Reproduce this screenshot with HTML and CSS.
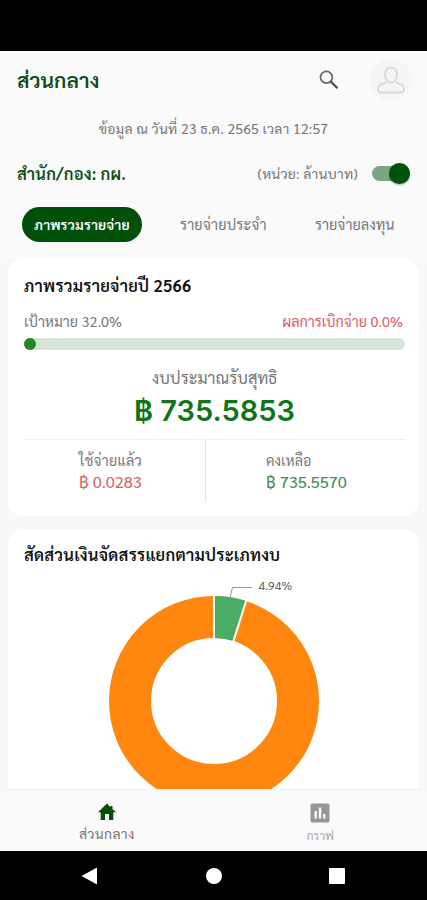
FILE: index.html
```html
<!DOCTYPE html>
<html lang="th">
<head>
<meta charset="utf-8">
<title>ส่วนกลาง</title>
<link rel="stylesheet" href="styles.css">
</head>
<body>
<div class="phone">
  <div class="status"></div>
  <header class="appbar">
    <h1 class="title">ส่วนกลาง</h1>
    <svg class="search" viewBox="0 0 20 20" width="20" height="20"><circle cx="7.4" cy="7.2" r="5.9" fill="none" stroke="#666" stroke-width="1.7"/><path d="M11.6 11.4 18.500 18.300" stroke="#555" stroke-width="2.3"/></svg>
    <div class="avatar"><svg viewBox="0 0 30 30" width="30" height="30" fill="none" stroke="#dadada" stroke-width="1.8"><path d="M9 9.500C9 5 11.300 2.600 15 2.600S21 5 21 9.500 18.500 17.500 15 17.500 9 14 9 9.500Z"/><path d="M10.500 17.500C5 18.500 2 20 2 24Q2 27.500 5 27.500H25Q28 27.500 28 24C28 20 25 18.500 19.500 17.500"/></svg></div>
  </header>
  <p class="date">ข้อมูล ณ วันที่ 23 ธ.ค. 2565 เวลา 12:57</p>
  <div class="office">
    <strong class="office-name">สำนัก/กอง: กผ.</strong>
    <span class="unit">(หน่วย: ล้านบาท)</span>
    <span class="switch"><span class="knob"></span></span>
  </div>
  <nav class="tabs">
    <span class="tab active"><span class="tab-a">ภาพรวมรายจ่าย</span></span>
    <span class="tab tab-b">รายจ่ายประจำ</span>
    <span class="tab tab-c">รายจ่ายลงทุน</span>
  </nav>
  <main class="content">
    <section class="card summary">
      <h2 class="heading">ภาพรวมรายจ่ายปี 2566</h2>
      <div class="goals"><span class="goal">เป้าหมาย 32.0%</span><span class="result">ผลการเบิกจ่าย 0.0%</span></div>
      <div class="bar"><span class="bar-dot"></span></div>
      <p class="net-label">งบประมาณรับสุทธิ</p>
      <p class="net">฿ 735.5853</p>
      <div class="split">
        <div class="cell"><span class="cell-label used">ใช้จ่ายแล้ว</span><span class="spent">฿ 0.0283</span></div>
        <div class="cell right"><span class="cell-label">คงเหลือ</span><span class="left-over">฿ 735.5570</span></div>
      </div>
    </section>
    <section class="card chart-card">
      <h2 class="heading chart-heading">สัดส่วนเงินจัดสรรแยกตามประเภทงบ</h2>
      <svg class="donut" width="240" height="240" viewBox="0 0 240 240">
        <circle cx="120" cy="130" r="84" fill="none" stroke="#ff870f" stroke-width="42"/>
        <path d="M120 46A84 84 0 0 1 145.700 50" fill="none" stroke="#4bac65" stroke-width="42"/>
        <path d="M120 68V24M139.100 71 152.600 28.500" stroke="#fff" stroke-width="2"/>
        <path d="M136 27 138.500 16.500H158" fill="none" stroke="#999" stroke-width="1"/>
        <text class="slice-label" x="164.500" y="19">4.94%</text>
      </svg>
    </section>
  </main>
  <nav class="bottom">
    <div class="item home"><svg viewBox="0 0 20 18" width="20" height="18"><path d="M10 .5 1 9.300H3.700V17H8V11H12V17H16.300V9.300H19L15.500 6V3H13.500V4.200Z" fill="#005006"/></svg><span class="home-text">ส่วนกลาง</span></div>
    <div class="item graph"><svg viewBox="0 0 20 20" width="20" height="20"><rect x=".5" y=".5" width="19" height="19" rx="2" fill="#969696"/><path d="M5.700 8V15.500M10 4.500V15.500M14.300 11V15.500" stroke="#fafafa" stroke-width="2.400"/></svg><span class="graph-text">กราฟ</span></div>
  </nav>
  <div class="system">
    <svg width="18" height="18" viewBox="0 0 18 18"><path d="M.5 9 16 .5V17.500Z" fill="#fff"/></svg>
    <svg width="18" height="18" viewBox="0 0 18 18"><circle cx="9" cy="9" r="8" fill="#fff"/></svg>
    <svg width="18" height="18" viewBox="0 0 18 18"><rect x="1" y="1" width="16" height="16" rx="1" fill="#fff"/></svg>
  </div>
</div>
</body>
</html>
```

FILE: styles.css
```css
* { box-sizing: border-box; margin: 0; padding: 0; }
body { background: #000; font-family: Sarabun, "Noto Sans Thai Looped", "Noto Looped Thai", Laksaman, Loma, Garuda, Waree, "Noto Sans", sans-serif; color: #777; }
.phone { width: 427px; height: 900px; display: flex; flex-direction: column; overflow: hidden; background: #fafafa; white-space: nowrap; }
.status { height: 51px; background: #000; flex: none; }
.appbar { height: 58px; flex: none; display: flex; align-items: center; padding-left: 17px; }
.title { flex: 1; font-size: 21px; line-height: 30px; color: #0b4d13; font-weight: 600; }
.search { margin-right: 31px; }
.avatar { width: 42px; height: 42px; border-radius: 50%; background: #f5f5f5; display: flex; align-items: center; justify-content: center; margin-right: 15px; }
.date { height: 38px; line-height: 38px; text-align: center; font-size: 14px; letter-spacing: .16px; flex: none; }
.office { height: 53px; flex: none; display: flex; align-items: center; padding: 0 17px; }
.office-name { flex: 1; font-size: 16.5px; line-height: 24px; padding-bottom: 1px; color: #0b4d13; letter-spacing: .2px; font-weight: 600; }
.unit { font-size: 14px; letter-spacing: .2px; margin-right: 14px; padding-bottom: 1px; }
.switch { width: 38px; height: 15px; border-radius: 8px; background: #79a77f; display: flex; align-items: center; justify-content: flex-end; }
.knob { width: 21px; height: 21px; flex: none; border-radius: 50%; background: #00530a; box-shadow: 0 1px 2px #0005; }
.tabs { height: 58px; flex: none; display: flex; align-items: flex-start; padding: 7px 0 0 22px; }
.tab { height: 35px; line-height: 34px; font-size: 14.5px; }
.active { width: 120px; border-radius: 18px; text-align: center; background: #00500a; color: #fff; font-size: 14px; font-weight: 600; margin-right: 38px; letter-spacing: .1px; }
.tab-b { width: 135px; letter-spacing: .15px; }
.content { flex: 1; min-height: 0; overflow: hidden; padding: 0 8px; display: flex; flex-direction: column; gap: 13px; background: #f8f8f8; }
.card { background: #fff; border-radius: 16px; padding: 0 14px 0 16px; flex: none; }
.summary { height: 258px; padding-top: 13px; }
.heading { font-size: 16.5px; line-height: 28px; height: 28px; color: #111; letter-spacing: .25px; font-weight: 600; }
.goals { display: flex; justify-content: space-between; font-size: 14.4px; line-height: 22px; height: 24px; margin-top: 11px; padding-right: 2px; }
.result { color: #d76167; }
.bar { height: 12px; border-radius: 6px; background: #d5e4d7; margin-top: 4px; }
.bar-dot { display: block; width: 12px; height: 12px; border-radius: 50%; background: #278529; }
.net-label { text-align: center; font-size: 16.5px; height: 26px; line-height: 26px; margin-top: 14px; }
.net { font-family: Inter, "Noto Sans", sans-serif; text-align: center; font-size: 29px; height: 40px; line-height: 41px; font-weight: 600; color: #107519; }
.split { display: flex; border-top: 1px solid #eee; margin-top: 9px; }
.cell { height: 62px; width: 181px; padding: 10px 0 0 55px; display: flex; flex-direction: column; font-size: 16.4px; }
.cell span { height: 21px; line-height: 21px; }
.cell .cell-label { font-size: 14.3px; }
.cell .used { letter-spacing: .25px; }
.right { flex: 1; padding-left: 60px; border-left: 1px solid #e5e5e5; }
.spent { color: #d76167; }
.left-over { color: #438b50; }
.chart-card { height: 330px; padding-top: 11px; }
.donut { display: block; margin: 3px 0 0 69.500px; }
.slice-label { font-size: 12px; fill: #666; }
.bottom { height: 62px; flex: none; display: flex; border-top: 1px solid #f4f4f4; background: #fafafa; }
.item { flex: 1; display: flex; flex-direction: column; align-items: center; padding-top: 13px; font-size: 14px; }
.item span { line-height: 20px; }
.home span { margin-top: 2px; letter-spacing: .3px; }
.graph span { font-size: 12px; color: #aaa; margin-top: 2px; }
.system { height: 49px; flex: none; background: #000; display: flex; justify-content: space-between; align-items: center; padding: 0 81px; }
```
